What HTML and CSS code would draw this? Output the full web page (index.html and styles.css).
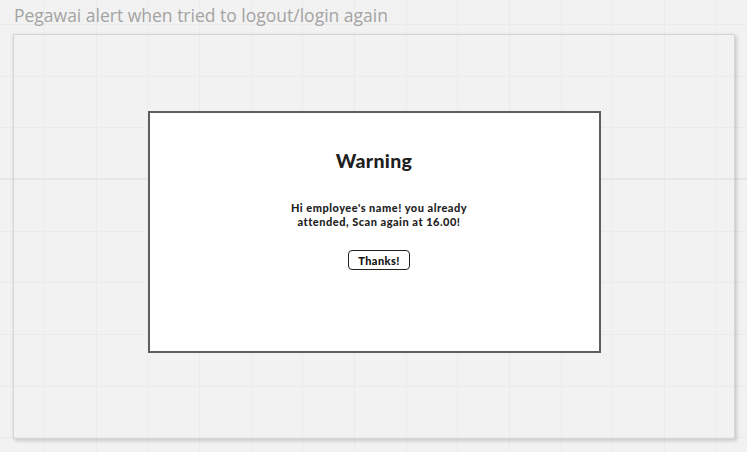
FILE: index.html
```html
<!DOCTYPE html>
<html>
<head>
<meta charset="utf-8">
<link rel="stylesheet" href="styles.css">
</head>
<body>
<div class="page">
  <div class="caption">Pegawai alert when tried to logout/login again</div>
  <div class="panel">
    <div class="dialog">
      <h1 class="title">Warning</h1>
      <p class="message">Hi employee's name! you already<br>attended, Scan again at 16.00!</p>
      <button class="btn">Thanks!</button>
    </div>
  </div>
</div>
</body>
</html>
```

FILE: styles.css
```css
html, body {
  margin: 0;
  padding: 0;
}
body {
  width: 747px;
  height: 452px;
  overflow: hidden;
  background-color: #f2f2f2;
  background-image:
    linear-gradient(to bottom, transparent 178px, #e6e6e6 178px, #e6e6e6 180px, transparent 180px),
    repeating-linear-gradient(to right, transparent 0, transparent 44px, #ebebeb 44px, #ebebeb 45px, transparent 45px, transparent 51.67px),
    repeating-linear-gradient(to bottom, transparent 0, transparent 24px, #ebebeb 24px, #ebebeb 25px, transparent 25px, transparent 51.67px);
  font-family: Lato, "Noto Sans", sans-serif;
}
.page {
  display: flex;
  flex-direction: column;
}
.caption {
  height: 34px;
  padding-left: 14px;
  box-sizing: border-box;
  font-family: "Open Sans", sans-serif;
  font-size: 17.5px;
  line-height: 30px;
  color: #a3a3a3;
  white-space: nowrap;
}
.panel {
  margin-left: 13px;
  width: 722px;
  height: 405px;
  box-sizing: border-box;
  border: 1px solid #d6d6d6;
  box-shadow: 2px 2px 4px rgba(0,0,0,0.16), -1px 0 3px rgba(0,0,0,0.05);
  display: flex;
  justify-content: center;
  align-items: flex-start;
  padding-top: 76px;
}
.dialog {
  width: 453px;
  height: 242px;
  box-sizing: border-box;
  background: #fff;
  border: 2px solid #5e5e5e;
  display: flex;
  flex-direction: column;
  align-items: center;
  color: #1f1f1f;
}
.title {
  margin: 36px 0 0;
  font-size: 19.5px;
  font-weight: 900;
  line-height: 24px;
  letter-spacing: 0.3px;
}
.message {
  margin: 28px 0 0 10px;
  font-size: 11px;
  font-weight: 900;
  line-height: 14px;
  text-align: center;
  letter-spacing: 0.5px;
}
.btn {
  margin: 21px 0 0 10px;
  width: 62px;
  height: 20px;
  box-sizing: border-box;
  padding: 0;
  background: #fff;
  border: 1px solid #222;
  border-radius: 4px;
  font-family: Lato, "Noto Sans", sans-serif;
  font-size: 11px;
  font-weight: 900;
  color: #111;
  letter-spacing: 0.4px;
}
```
